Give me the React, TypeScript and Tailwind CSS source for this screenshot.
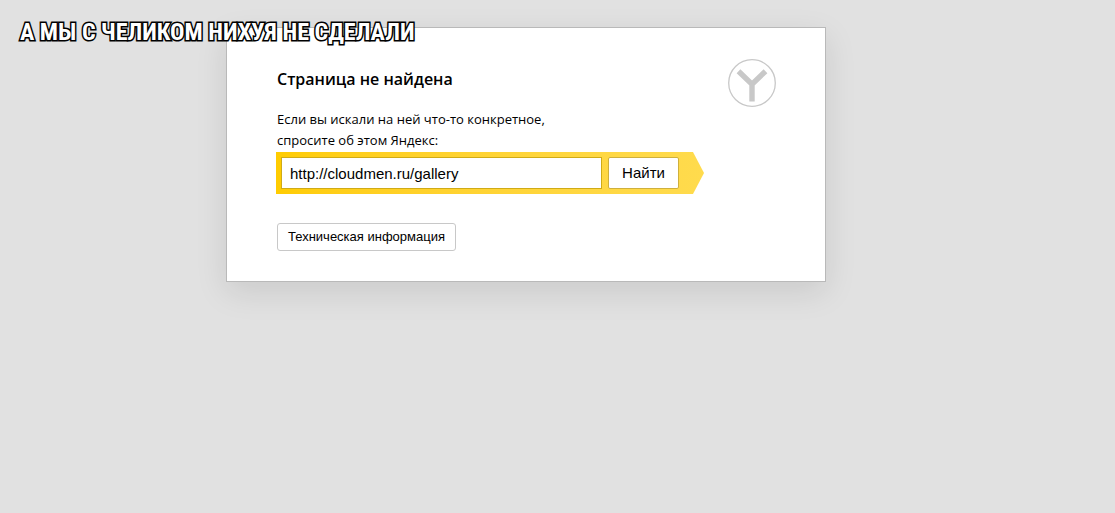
import { useState } from "react";

function BrowserLogo() {
  return (
    <svg className="size-12 shrink-0" viewBox="0 0 48 48" fill="none" aria-hidden="true">
      <circle cx="24" cy="24" r="23.3" stroke="#c8c8c8" strokeWidth="1.3" />
      <path d="M10.5 12.2 24 25.2 37.5 12.2M24 23.5V42.5" stroke="#c8c8c8" strokeWidth="5.4" />
    </svg>
  );
}

function SearchForm() {
  const [query, setQuery] = useState("http://cloudmen.ru/gallery");
  return (
    <form
      onSubmit={(e) => e.preventDefault()}
      className="mt-px -ml-px flex w-full max-w-[428px] gap-1.5 bg-linear-to-r from-[#fc0] to-[#ffdb4d] py-[5px] pr-[25px] pl-[5px] [clip-path:polygon(0_0,calc(100%-11px)_0,100%_50%,calc(100%-11px)_100%,0_100%)]"
    >
      <input
        type="text"
        aria-label="Поиск"
        value={query}
        onChange={(e) => setQuery(e.target.value)}
        className="h-8 min-w-0 flex-1 border border-[#d0ab16] bg-white px-2 font-['Liberation_Sans',sans-serif] text-[15px] text-black outline-none"
      />
      <button
        type="submit"
        className="h-8 w-[71px] rounded-xs border border-[#cfb03c] bg-white font-['Liberation_Sans',sans-serif] text-[15px] text-black"
      >
        Найти
      </button>
    </form>
  );
}

export default function App() {
  return (
    <div className="relative min-h-screen bg-[#e1e1e1] pt-[27px] pr-[63px] text-black">
      <p className="absolute top-4 left-5 font-['Roboto_Condensed',Roboto,sans-serif] text-2xl leading-8 font-bold whitespace-nowrap text-white [-webkit-text-stroke:3px_#000] [paint-order:stroke_fill]">
        А МЫ С ЧЕЛИКОМ НИХУЯ НЕ СДЕЛАЛИ
      </p>
      <main className="mx-auto max-w-[600px] border border-[#b9b9b9] bg-white px-[50px] pt-[31px] pb-[30px] font-['Open_Sans',sans-serif] shadow-[0_10px_30px_rgba(0,0,0,0.1)]">
        <div className="-mr-px flex items-start justify-between">
          <div>
            <h1 className="pt-2 text-base leading-6 font-semibold">Страница не найдена</h1>
            <p className="pt-[18px] text-[13px] leading-[21px]">
              Если вы искали на ней что-то конкретное,
              <br />
              спросите об этом Яндекс:
            </p>
          </div>
          <BrowserLogo />
        </div>
        <SearchForm />
        <button
          type="button"
          className="mt-[29px] block h-7 w-[179px] rounded-[3px] border border-[#c8c8c8] bg-white font-['Liberation_Sans',sans-serif] text-[13px]"
        >
          Техническая информация
        </button>
      </main>
    </div>
  );
}
